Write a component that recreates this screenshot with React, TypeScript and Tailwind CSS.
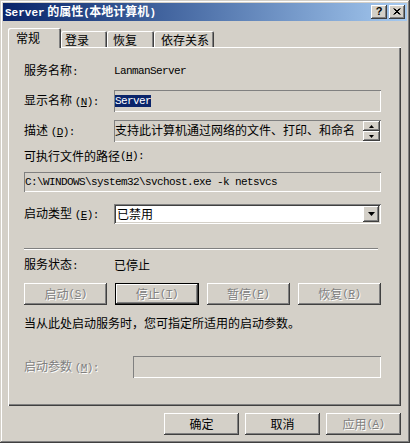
import React from 'react';

const raised = 'shadow-[inset_-1px_-1px_#404040,inset_1px_1px_#ffffff,inset_-2px_-2px_#808080]';
const sunkenThin = 'shadow-[inset_1px_1px_#808080,inset_-1px_-1px_#ffffff]';
const sunken = 'shadow-[inset_1px_1px_#808080,inset_-1px_-1px_#ffffff,inset_2px_2px_#404040,inset_-2px_-2px_#d4d0c8]';
const mono = "font-['Liberation_Mono',monospace] text-[11px] tracking-[-0.6px]";
const grayText = 'text-[#808080] [text-shadow:1px_1px_0_#ffffff]';

const Acc = ({ k, colon = false }: { k: string; colon?: boolean }) => (
    <span className={mono}>
        (<span className="underline">{k}</span>){colon ? ':' : ''}
    </span>
);

const Btn = ({ children, off = false, dark = false, w = 'w-full' }: { children: React.ReactNode; off?: boolean; dark?: boolean; w?: string }) => (
    <div className={`${w} flex items-center justify-center bg-[#d4d0c8] ${raised} ${dark ? 'border border-black h-[22px]' : 'h-[22px]'} ${off ? grayText : ''}`}>
        {children}
    </div>
);

const Arrow = ({ up = false, size = 'big' }: { up?: boolean; size?: 'big' | 'small' }) =>
    size === 'big' ? (
        <svg width="7" height="4" viewBox="0 0 7 4">
            <path d="M0 0h7L3.5 4z" fill="#000" />
        </svg>
    ) : (
        <svg width="5" height="3" viewBox="0 0 5 3">
            <path d={up ? 'M2.5 0L5 3H0z' : 'M0 0h5L2.5 3z'} fill="#000" />
        </svg>
    );

const TitleBar = () => (
    <div className="h-[18px] flex items-center bg-linear-to-r from-[#0a246a] to-[#a6caf0] pl-[2px] pr-[2px]">
        <div className="flex-1 text-white font-bold text-[12px] leading-[14px] whitespace-nowrap">
            <span className="font-['Liberation_Mono',monospace] font-bold text-[11px]">Server</span> 的属性<span className={`${mono} font-bold`}>(</span>本地计算机<span className={`${mono} font-bold`}>)</span>
        </div>
        <div className="flex gap-[2px]">
            <div className={`w-[16px] h-[14px] bg-[#d4d0c8] ${raised} flex items-center justify-center font-['Liberation_Sans',sans-serif] font-bold text-[11px] leading-none pb-[1px]`}>?</div>
            <div className={`w-[16px] h-[14px] bg-[#d4d0c8] ${raised} flex items-center justify-center pb-[1px] pr-[1px]`}>
                <svg width="8" height="7" viewBox="0 0 8 7">
                    <path d="M0.5 0.5L6.5 6.5M1.5 0.5L7.5 6.5M6.5 0.5L0.5 6.5M7.5 0.5L1.5 6.5" stroke="#000" strokeWidth="1" />
                </svg>
            </div>
        </div>
    </div>
);

const tabs = [
    { label: '登录', w: 'w-[46px]', pl: 'pl-[4px]' },
    { label: '恢复', w: 'w-[47px]', pl: 'pl-[6px]' },
    { label: '依存关系', w: 'w-[60px]', pl: 'pl-[7px]' },
];

const Tabs = () => (
    <div className="relative z-10 -mb-px flex items-end h-[20px]">
        <div className="w-[53px] h-[20px] bg-[#d4d0c8] rounded-t-[2px] pl-[8px] pb-[1px] flex items-center shadow-[inset_1px_1px_#ffffff,inset_-1px_0_#404040,inset_-2px_0_#808080]">
            常规
        </div>
        {tabs.map((t) => (
            <div
                key={t.label}
                className={`${t.w} ${t.pl} h-[16px] mb-px bg-[#d4d0c8] rounded-t-[2px] flex items-center pt-[1px] shadow-[inset_1px_1px_#ffffff,inset_-1px_0_#404040,inset_-2px_0_#808080]`}
            >
                {t.label}
            </div>
        ))}
    </div>
);

const Panel = () => (
    <div className="w-[393px] h-[359px] pt-[16px] pl-[16px] shadow-[inset_1px_1px_#ffffff,inset_-1px_-1px_#404040,inset_-2px_-2px_#808080]">
        <div className="flex items-center h-[16px]">
            <span className="w-[90px] shrink-0">
                服务名称<span className={mono}>:</span>
            </span>
            <span className={mono}>LanmanServer</span>
        </div>

        <div className="flex items-center h-[22px] mt-[11px]">
            <span className="w-[90px] shrink-0">
                显示名称 <Acc k="N" colon />
            </span>
            <div className={`w-[267px] h-[22px] ${sunkenThin} flex items-center pl-px`}>
                <span className={`${mono} bg-[#0a246a] text-white leading-[12px]`}>Server</span>
            </div>
        </div>

        <div className="flex items-center h-[22px] mt-[8px]">
            <span className="w-[90px] shrink-0">
                描述 <Acc k="D" colon />
            </span>
            <div className={`w-[267px] h-[22px] ${sunkenThin} flex items-start pt-px pl-px pr-px`}>
                <span className="w-[240px] overflow-hidden whitespace-nowrap leading-[16px] pt-[1px]">支持此计算机通过网络的文件、打印、和命名</span>
                <div className="flex flex-col w-[17px] ml-auto">
                    <div className={`h-[10px] bg-[#d4d0c8] ${raised} flex items-center justify-center`}>
                        <Arrow up size="small" />
                    </div>
                    <div className={`h-[10px] bg-[#d4d0c8] ${raised} flex items-center justify-center`}>
                        <Arrow size="small" />
                    </div>
                </div>
            </div>
        </div>

        <div className="flex items-center h-[16px] mt-[6px]">
            可执行文件的路径 <Acc k="H" colon />
        </div>

        <div className={`w-[357px] h-[20px] mt-[8px] ${sunkenThin} flex items-center pl-[1px]`}>
            <span className={mono}>{'C:\\WINDOWS\\system32\\svchost.exe -k netsvcs'}</span>
        </div>

        <div className="flex items-center h-[20px] mt-[12px]">
            <span className="w-[90px] shrink-0">
                启动类型 <Acc k="E" colon />
            </span>
            <div className={`w-[267px] h-[20px] bg-white ${sunken} flex items-center p-[2px]`}>
                <span className="flex-1 pl-[1px]">已禁用</span>
                <div className={`w-[16px] h-[16px] bg-[#d4d0c8] ${raised} flex items-center justify-center`}>
                    <Arrow />
                </div>
            </div>
        </div>

        <div className="w-[354px] h-[2px] mt-[24px] border-t border-t-[#808080] border-b border-b-white" />

        <div className="flex items-center h-[16px] mt-[7px]">
            <span className="w-[90px] shrink-0">
                服务状态<span className={mono}>:</span>
            </span>
            <span>已停止</span>
        </div>

        <div className="grid grid-cols-4 gap-[8px] w-[357px] mt-[10px]">
            <Btn off>
                启动<Acc k="S" />
            </Btn>
            <Btn off dark>
                停止<Acc k="T" />
            </Btn>
            <Btn off>
                暂停<Acc k="P" />
            </Btn>
            <Btn off>
                恢复<Acc k="R" />
            </Btn>
        </div>

        <div className="flex items-center h-[16px] mt-[10px]">当从此处启动服务时，您可指定所适用的启动参数。</div>

        <div className="flex items-center h-[22px] mt-[25px]">
            <span className={`w-[109px] shrink-0 ${grayText}`}>
                启动参数 <Acc k="M" colon />
            </span>
            <div className={`w-[248px] h-[22px] ${sunkenThin}`} />
        </div>
    </div>
);

export default function App() {
    return (
        <div className="w-[410px] h-[443px] bg-[#d4d0c8] p-[3px] flex flex-col overflow-hidden font-['Noto_Sans_CJK_SC','Noto_Sans',sans-serif] text-[12px] leading-[16px] text-black shadow-[inset_-1px_-1px_#404040,inset_1px_1px_#d4d0c8,inset_-2px_-2px_#808080,inset_2px_2px_#ffffff]">
            <TitleBar />
            <div className="flex-1 flex flex-col pt-[7px] pl-[5px] pr-[6px]">
                <Tabs />
                <Panel />
                <div className="flex justify-end gap-[6px] mt-[7px]">
                    <Btn w="w-[75px]">确定</Btn>
                    <Btn w="w-[75px]">取消</Btn>
                    <Btn w="w-[75px]" off>
                        应用<Acc k="A" />
                    </Btn>
                </div>
            </div>
        </div>
    );
}
